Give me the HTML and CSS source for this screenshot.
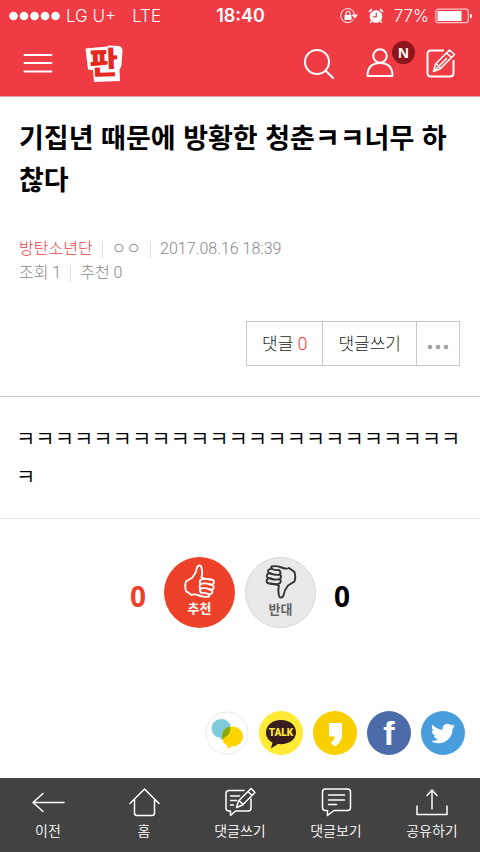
FILE: index.html
```html
<!DOCTYPE html>
<html lang="ko">
<head>
<meta charset="utf-8">
<meta name="viewport" content="width=device-width, initial-scale=1">
<title>기집년 때문에 방황한 청춘ㅋㅋ너무 하찮다</title>
<link rel="stylesheet" href="styles.css">
</head>
<body>

<header class="top">
    <div class="status">
        <div class="status-left">
            <svg width="51" height="10" viewBox="0 0 51 10" fill="#fff"><circle cx="4.500" cy="5" r="4.300"/><circle cx="15" cy="5" r="4.300"/><circle cx="25.500" cy="5" r="4.300"/><circle cx="36" cy="5" r="4.300"/><circle cx="46.500" cy="5" r="4.300"/></svg>
            <span>LG U+</span>
            <span class="network">LTE</span>
        </div>
        <div class="clock">18:40</div>
        <div class="status-right">
            <svg width="18" height="16" viewBox="0 0 18 16" fill="none" stroke="#fff"><path d="M13.500 11.500A7 7 0 1 1 14.500 6"/><path d="M11.500 6.500h6.500l-3.200 4z" fill="#fff" stroke="none"/><rect x="4.500" y="7" width="7" height="5" rx=".5" fill="#fff" stroke="none"/><path d="M6 7V5.500a2 2 0 0 1 4 0V7" stroke-width="1.200"/></svg>
            <svg class="alarm" width="16" height="16" viewBox="0 0 16 16" fill="none" stroke="#fff"><circle cx="8" cy="8.500" r="6.300" fill="#fff" stroke="none"/><path d="M1.200 4A7 7 0 0 1 4 1.300M12 1.300A7 7 0 0 1 14.800 4" stroke-width="1.600"/><path d="M3.500 13l-1.300 1.800M12.500 13l1.300 1.800" stroke-width="1.400"/><path d="M8.300 4.800v4H5" stroke="#ef3b43" stroke-width="1.200"/></svg>
            <span>77%</span>
            <svg width="37" height="16" viewBox="0 0 37 16" fill="none"><rect x=".8" y="1.200" width="32.500" height="13.500" rx="2.500" stroke="#fbc8ca" stroke-width="1.200"/><rect x="2.500" y="3" width="24" height="10" fill="#fff"/><path d="M35 5.500q2 .5 2 2.500t-2 2.500z" fill="#fff"/></svg>
        </div>
    </div>
    <div class="bar">
        <button class="icon-btn" aria-label="메뉴">
            <svg width="30" height="30" viewBox="0 0 30 30" stroke="#fff" stroke-width="1.800" stroke-linecap="round"><path d="M1.500 6h27M1.500 14h27M1.500 22.500h27"/></svg>
        </button>
        <a class="logo" href="#" aria-label="판">
            <svg width="40" height="40" viewBox="0 0 40 40"><path d="M1.500 4.500L23.500 2.500L24 1.500L35 2Q38.500 3 38.500 7L37.500 21Q37 24 35.500 25L36 37L10 38L9 26L4 25.500Z" fill="#fff"/><path d="M23.500 2.500L25.500 21L10 25" fill="none" stroke="#e4dede"/><text x="20" y="30" text-anchor="middle" transform="rotate(-2 20 20)">판</text></svg>
        </a>
        <div class="tools">
            <button class="icon-btn" aria-label="검색">
                <svg width="32" height="32" viewBox="0 0 32 32" fill="none" stroke="#fff" stroke-width="2" stroke-linecap="round"><circle cx="14" cy="14" r="12"/><path d="M22.500 22.500L30 30"/></svg>
            </button>
            <button class="icon-btn" aria-label="내 정보">
                <svg width="30" height="32" viewBox="0 0 30 32" fill="none" stroke="#fff" stroke-width="2" stroke-linejoin="round"><circle cx="15" cy="8" r="6.700"/><path d="M2.500 28C2.500 19 7 15 15 15s12.500 4 12.500 13z"/></svg>
                <span class="badge">N</span>
            </button>
            <button class="icon-btn" aria-label="글쓰기">
                <svg width="32" height="32" viewBox="0 0 32 32" fill="none" stroke="#fff" stroke-width="2" stroke-linejoin="round"><path d="M19 2.500H6q-3.500 0-3.500 3.500v19q0 3.500 3.500 3.500h19q3.500 0 3.500-3.500V12"/><path d="M8.500 23.500l2-7.500L24.500 2l5 4.500L15 21zM21.500 5l5 4.500M11.500 16l4 4M8.500 23.500L22 10" stroke-width="1.600"/></svg>
            </button>
        </div>
    </div>
</header>

<main>
    <section class="post-head">
        <h1>기집년 때문에 방황한 청춘ㅋㅋ너무 하찮다</h1>
        <div class="meta">
            <a class="channel" href="#">방탄소년단</a>
            <span>ㅇㅇ</span>
            <span>2017.08.16 18:39</span>
        </div>
        <div class="meta">
            <span>조회 1</span>
            <span>추천 0</span>
        </div>
        <div class="actions">
            <button>댓글 <em>0</em></button>
            <button>댓글쓰기</button>
            <button class="more" aria-label="더보기">
                <svg width="22" height="6" viewBox="0 0 22 6" fill="#a5a5a5"><circle cx="3" cy="3" r="2.300"/><circle cx="11" cy="3" r="2.300"/><circle cx="19" cy="3" r="2.300"/></svg>
            </button>
        </div>
    </section>

    <p class="post-body">ㅋㅋㅋㅋㅋㅋㅋㅋㅋㅋㅋㅋㅋㅋㅋㅋㅋㅋㅋㅋㅋㅋㅋㅋ</p>

    <section class="votes">
        <span class="count up-count">0</span>
        <div class="vote-btns">
            <button class="vote up">
                <svg width="32" height="34" viewBox="0 0 32 34" fill="none" stroke="#fff" stroke-width="1.900" stroke-linejoin="round" stroke-linecap="round"><path d="M2 17.500L8.500 13.500Q12.500 8.500 13 3.500Q14.500 .5 17 2Q19 7 17.500 13.500Q21 15 27.500 15.500Q31 16.500 29.500 19.500Q29 21 26 20.500Q30.500 21 29.500 24Q29 26 26 25.500Q29.500 26.500 28 29Q27 30.500 24.500 30Q26 31 25 32.500Q20 33.500 15 31.500Q10 29.500 7.500 31L2 27Q.5 22 2 17.500Z"/><path d="M26 15.500Q19 14 16.500 16Q15 18 16.500 20Q21 18.500 26 20.500M16.500 20Q14.500 22.500 16.500 24.500Q21 23.500 26 25.500M16.500 24.500Q15 27 17.500 29Q21 28.500 24.500 30"/></svg>
                <span>추천</span>
            </button>
            <button class="vote down">
                <svg width="32" height="34" viewBox="0 0 32 34" fill="none" stroke="#333" stroke-width="1.900" stroke-linejoin="round" stroke-linecap="round"><path d="M29.500 16.500L23 20.500Q19 25.500 18.500 30.500Q17 33.500 14.500 32Q12.500 27 14 20.500Q10.500 19 4 18.500Q.5 17.500 2 14.500Q2.500 13 5.500 13.500Q1 13 2 10Q2.500 8 5.500 8.500Q2 7.500 3.500 5Q4.500 3.500 7 4Q5.500 3 6.500 1.500Q11.500 .5 16.500 2.500Q21.500 4.500 24 3L29.500 7Q31 12 29.500 16.500Z"/><path d="M5.500 18.500Q12.500 20 15 18Q16.500 16 15 14Q10.500 15.500 5.500 13.500M15 14Q17 11.500 15 9.500Q10.500 10.500 5.500 8.500M15 9.500Q16.500 7 14 5Q10.500 5.500 7 4"/></svg>
                <span>반대</span>
            </button>
        </div>
        <span class="count">0</span>
    </section>

    <section class="share">
        <a href="#" aria-label="네이트온">
            <svg viewBox="0 0 44 44"><circle cx="22" cy="22" r="21" fill="#fff" stroke="#ececec"/><path d="M16 8a9.500 9.500 0 1 0 0 19c-.5 1-1 1.500-1.500 2 2-.3 3.500-1 5-2.500A9.500 9.500 0 0 0 16 8z" fill="#7fcadb"/><path d="M27.500 15.500c-6.500 0-10.500 4.500-10.500 9.500 0 4.500 2 8 5.500 9.500 0 1.500-.3 2-.5 3 2-.3 3.500-1 4.500-2 7 0 11.500-4.500 11.500-10s-4.500-10-10.500-10z" fill="#ffd400"/><path d="M25 15.700c1.500 4.500-1 8.500-5.500 10.800-.5 1-1.200 1.500-2 1.500-1.400-6 1.200-11.200 7.500-12.300z" fill="#87aa00"/></svg>
        </a>
        <a href="#" aria-label="카카오톡">
            <svg viewBox="0 0 44 44"><circle cx="22" cy="22" r="22" fill="#ffea35"/><path d="M22 9C13 9 7 14.500 7 21.500c0 4.500 2.500 8 6.500 10L12 37.500l7-4.500c10 1 18-4 18-11.500S31 9 22 9z" fill="#371d1e"/><text class="talk" x="22" y="25" text-anchor="middle">TALK</text></svg>
        </a>
        <a href="#" aria-label="카카오스토리">
            <svg viewBox="0 0 44 44"><circle cx="22" cy="22" r="22" fill="#f9cf00"/><path d="M16 12h13v12c0 5-3 9-7 11.500l-4.500-3.500c2.500-2 4-4 4.500-6.500h-6z" fill="#fff"/></svg>
        </a>
        <a href="#" aria-label="페이스북">
            <svg viewBox="0 0 44 44"><circle cx="22" cy="22" r="22" fill="#4b6ca8"/><text class="fb" x="22" y="34" text-anchor="middle">f</text></svg>
        </a>
        <a href="#" aria-label="트위터">
            <svg viewBox="0 0 44 44"><circle cx="22" cy="22" r="22" fill="#489edd"/><path transform="translate(10 10.500)" fill="#fff" d="M23.950 4.570a10 10 0 0 1-2.820.770 4.960 4.960 0 0 0 2.160-2.720c-.95.550-2 .95-3.130 1.180a4.920 4.920 0 0 0-8.380 4.480C7.690 8.100 4.070 6.130 1.640 3.160a4.820 4.820 0 0 0-.66 2.480c0 1.710.87 3.210 2.190 4.100a4.900 4.900 0 0 1-2.230-.62v.06a4.920 4.920 0 0 0 3.950 4.830 5 5 0 0 1-2.210.08 4.940 4.940 0 0 0 4.600 3.420A9.870 9.870 0 0 1 0 19.540a14 14 0 0 0 7.550 2.210c9.050 0 14-7.500 14-13.980 0-.21 0-.42-.02-.63a9.940 9.940 0 0 0 2.420-2.570z"/></svg>
        </a>
    </section>
</main>

<nav class="bottom">
    <a href="#">
        <svg width="34" height="32" viewBox="0 0 34 32"><path d="M12 7.500L2 16.500l10 9M2 16.500h31"/></svg>
        <span>이전</span>
    </a>
    <a href="#">
        <svg width="32" height="32" viewBox="0 0 32 32"><path d="M2 17.500L16.500 3L31 17.500M6.500 13.500V27q0 2.500 2.500 2.500h15q2.500 0 2.500-2.500V13.500"/></svg>
        <span>홈</span>
    </a>
    <a href="#">
        <svg width="32" height="32" viewBox="0 0 32 32"><path d="M20 4.500H5Q2 4.500 2 7.500v14.500q0 3 3 3h1.500v4.500l5-4.500H24q3 0 3-3V13"/><path d="M6.500 10h9M6.500 14.500h6M6.500 19h3M12.500 21.500l2-6.500L27 2.500l4 4L18.500 19zM24 5.500l4 4M15.500 15l3.500 3.500"/></svg>
        <span>댓글쓰기</span>
    </a>
    <a href="#">
        <svg width="32" height="32" viewBox="0 0 32 32"><path d="M5.500 3h22q3 0 3 3v15.500q0 3-3 3H14l-6.500 5v-5h-2q-3 0-3-3V6q0-3 3-3zM8.500 9h16M8.500 14h16M8.500 18.500h8"/></svg>
        <span>댓글보기</span>
    </a>
    <a href="#">
        <svg width="34" height="32" viewBox="0 0 34 32"><path d="M2 20v8.500h30V20M17 23V4M12 9.500l5-5.500 5 5.500"/></svg>
        <span>공유하기</span>
    </a>
</nav>

</body>
</html>
```
FILE: styles.css
```css
* {
    box-sizing: border-box;
}
body {
    margin: 0;
    min-height: 100vh;
    display: flex;
    flex-direction: column;
    background: #fff;
    color: #000;
    font-family: "Noto Sans CJK KR", sans-serif;
}
a {
    color: inherit;
    text-decoration: none;
}
button {
    padding: 0;
    border: 0;
    background: none;
    color: inherit;
    font: inherit;
}
svg {
    display: block;
}

/* header */
.top {
    height: 97px;
    background: #ef3b43;
    color: #fff;
    border-bottom: 1px solid #d9a5a7;
}
.status {
    display: grid;
    grid-template-columns: 1fr auto 1fr;
    align-items: center;
    height: 31px;
    padding: 0 8px 0 9px;
    font: 300 17px/20px Inter, sans-serif;
}
.status-left, .status-right {
    display: flex;
    align-items: center;
    gap: 6px;
}
.status-right {
    justify-content: flex-end;
}
.network {
    margin-left: 10px;
}
.alarm {
    margin: 0 4px;
}
.clock {
    font-weight: 600;
    font-size: 18px;
}
.bar {
    display: flex;
    align-items: center;
    height: 65px;
    padding: 0 23px;
}
.icon-btn {
    position: relative;
}
.logo {
    margin-left: 31px;
}
.logo svg {
    overflow: visible;
}
.logo text {
    font-size: 31px;
    font-weight: 900;
    fill: #e5281f;
}
.tools {
    display: flex;
    align-items: center;
    gap: 30px;
    margin-left: auto;
}
.badge {
    position: absolute;
    top: -7px;
    right: -20px;
    width: 23px;
    height: 23px;
    border-radius: 50%;
    background: #8e151c;
    font: 700 14px/23px "Open Sans", sans-serif;
    text-align: center;
}

/* post */
.post-head {
    padding: 19px 20px 30px 19px;
    border-bottom: 1px solid #c8c8c8;
}
h1 {
    margin: 0 0 37px;
    font-size: 27px;
    font-weight: 700;
    line-height: 42px;
    word-break: break-all;
}
.meta {
    display: flex;
    align-items: center;
    font: 300 16px/24px Roboto, "Noto Sans CJK KR", sans-serif;
    color: #888;
}
.meta > * + * {
    display: flex;
    align-items: center;
}
.meta > * + *::before {
    content: "";
    width: 1px;
    height: 17px;
    margin: 0 9px;
    background: #ddd;
}
.channel {
    color: #ef3b43;
}
.actions {
    display: flex;
    width: fit-content;
    margin: 36px 0 0 auto;
    border: 1px solid #c8c8c8;
}
.actions button {
    height: 43px;
    padding: 0 15px;
    font: 300 17px/24px Roboto, "Noto Sans CJK KR", sans-serif;
    color: #222;
}
.actions button + button {
    border-left: 1px solid #c8c8c8;
}
.actions .more {
    padding: 6px 10px 0;
}
.actions em {
    font-style: normal;
    font-size: 18px;
    color: #ef3b43;
}
.post-body {
    margin: 0;
    padding: 21px 16px 24px;
    border-bottom: 1px solid #e4e4e4;
    font-size: 21px;
    font-weight: 350;
    line-height: 38px;
    word-break: break-all;
}

/* votes */
.votes {
    display: flex;
    justify-content: center;
    align-items: center;
    gap: 18px;
    padding: 38px 0 83px;
}
.vote-btns {
    display: flex;
    gap: 10px;
}
.count {
    padding-top: 6px;
    font: 700 28px/36px "Noto Sans", sans-serif;
}
.up-count {
    color: #ee4129;
}
.vote {
    display: flex;
    flex-direction: column;
    align-items: center;
    width: 71px;
    height: 71px;
    padding-top: 7px;
    border-radius: 50%;
    font-size: 13px;
    font-weight: 700;
    line-height: 20px;
}
.up {
    background: #ee4129;
    color: #fff;
}
.down {
    background: #e9e9e9;
    border: 1px solid #d8d8d8;
    color: #666;
}

/* share */
.share {
    display: flex;
    justify-content: flex-end;
    gap: 10px;
    padding: 0 15px 23px;
}
.share svg {
    width: 44px;
    height: 44px;
}
.talk {
    font: 900 10px Roboto, sans-serif;
    fill: #ffea35;
}
.fb {
    font: 700 34px "Liberation Sans", sans-serif;
    fill: #fff;
}

/* bottom bar */
.bottom {
    display: grid;
    grid-template-columns: repeat(5, 1fr);
    margin-top: auto;
    padding: 8px 0 12px;
    background: #424242;
    color: #fff;
}
.bottom a {
    display: flex;
    flex-direction: column;
    align-items: center;
    gap: 2px;
    font-size: 14px;
    font-weight: 350;
    line-height: 20px;
}
.bottom svg {
    fill: none;
    stroke: #fff;
    stroke-width: 1.5px;
    stroke-linecap: round;
    stroke-linejoin: round;
}
```
